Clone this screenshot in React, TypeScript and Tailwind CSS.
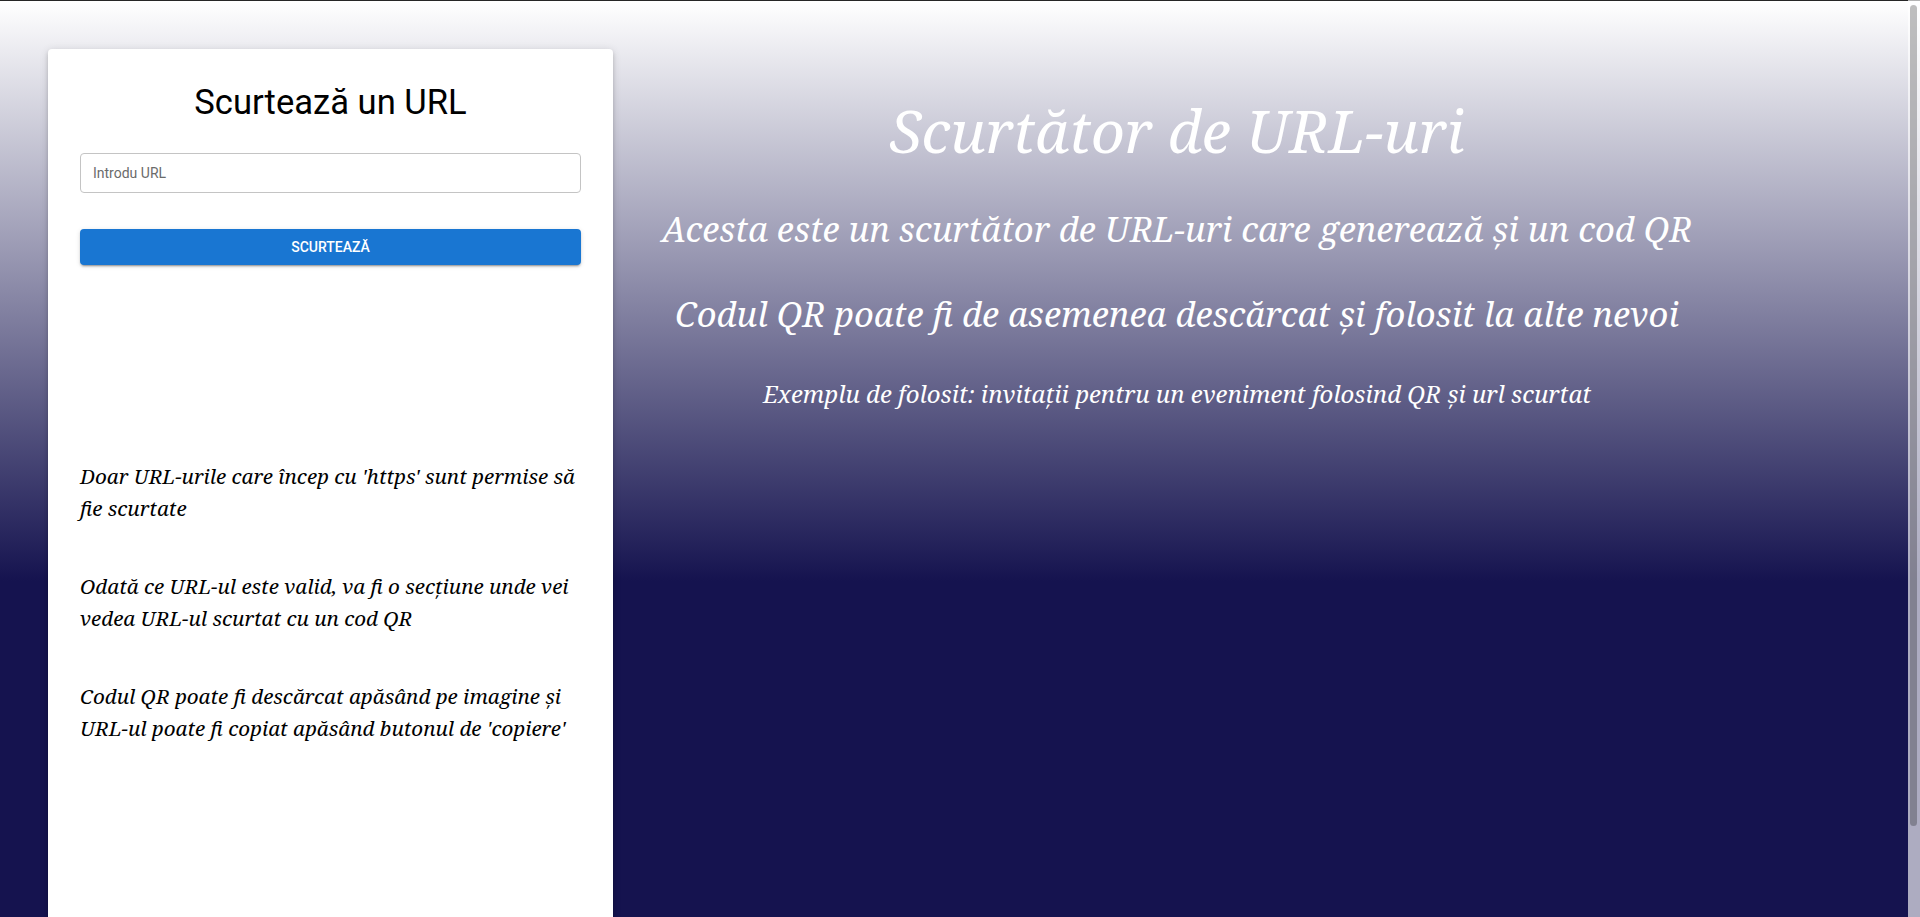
import React from 'react';

const notes = [
  "Doar URL-urile care încep cu 'https' sunt permise să fie scurtate",
  'Odată ce URL-ul este valid, va fi o secțiune unde vei vedea URL-ul scurtat cu un cod QR',
  "Codul QR poate fi descărcat apăsând pe imagine și URL-ul poate fi copiat apăsând butonul de 'copiere'",
];

const App: React.FC = () => {
  return (
    <div className="min-h-[1024px] border-t border-[#262626] bg-[linear-gradient(to_bottom,#ffffff_0px,#15134f_580px,#15134f_100%)] font-['Roboto',sans-serif]">
      <div className="flex items-start pt-12">
        {/* Form card */}
        <section className="ml-12 h-[951px] w-[565px] shrink-0 rounded bg-white px-8 pt-8 shadow-[0px_3px_3px_-2px_rgba(0,0,0,0.2),0px_3px_4px_0px_rgba(0,0,0,0.14),0px_1px_8px_0px_rgba(0,0,0,0.12)]">
          <h1 className="text-center text-[34.6px] leading-[42px] font-normal text-black">
            Scurtează un URL
          </h1>
          <input
            type="text"
            placeholder="Introdu URL"
            className="mt-[30px] block h-10 w-full rounded border border-[#c4c4c4] bg-white px-3 text-sm text-black outline-none placeholder:text-[#6b6b6b]"
          />
          <button className="mt-9 block h-9 w-full rounded bg-[#1976d2] text-sm font-medium text-white uppercase shadow-[0px_3px_1px_-2px_rgba(0,0,0,0.2),0px_2px_2px_0px_rgba(0,0,0,0.14),0px_1px_5px_0px_rgba(0,0,0,0.12)]">
            Scurtează
          </button>
          <div className="mt-[195px] flex flex-col gap-[46px]">
            {notes.map((n) => (
              <p key={n} className="font-['Noto_Serif','DejaVu_Serif',serif] text-[20.6px] leading-8 text-black italic">
                {n}
              </p>
            ))}
          </div>
        </section>

        {/* Intro text */}
        <div className="w-[1128px] text-center font-['Noto_Serif','DejaVu_Serif',serif] text-white italic">
          <h2 className="mt-[45px] text-[59px] leading-[72px] font-normal">Scurtător de URL-uri</h2>
          <p className="mt-[43px] text-[34.5px] leading-10">
            Acesta este un scurtător de URL-uri care generează și un cod QR
          </p>
          <p className="mt-[45px] text-[34.5px] leading-10">
            Codul QR poate fi de asemenea descărcat și folosit la alte nevoi
          </p>
          <p className="mt-[46px] text-[24px] leading-7">
            Exemplu de folosit: invitații pentru un eveniment folosind QR și url scurtat
          </p>
        </div>
      </div>

      {/* scrollbar */}
      <div className="fixed top-0 right-0 h-[917px] w-3 bg-white/65 px-0.5 pt-[5px]">
        <div className="h-[821px] w-[7px] rounded-full bg-black/25" />
      </div>
    </div>
  );
};

export default App;
